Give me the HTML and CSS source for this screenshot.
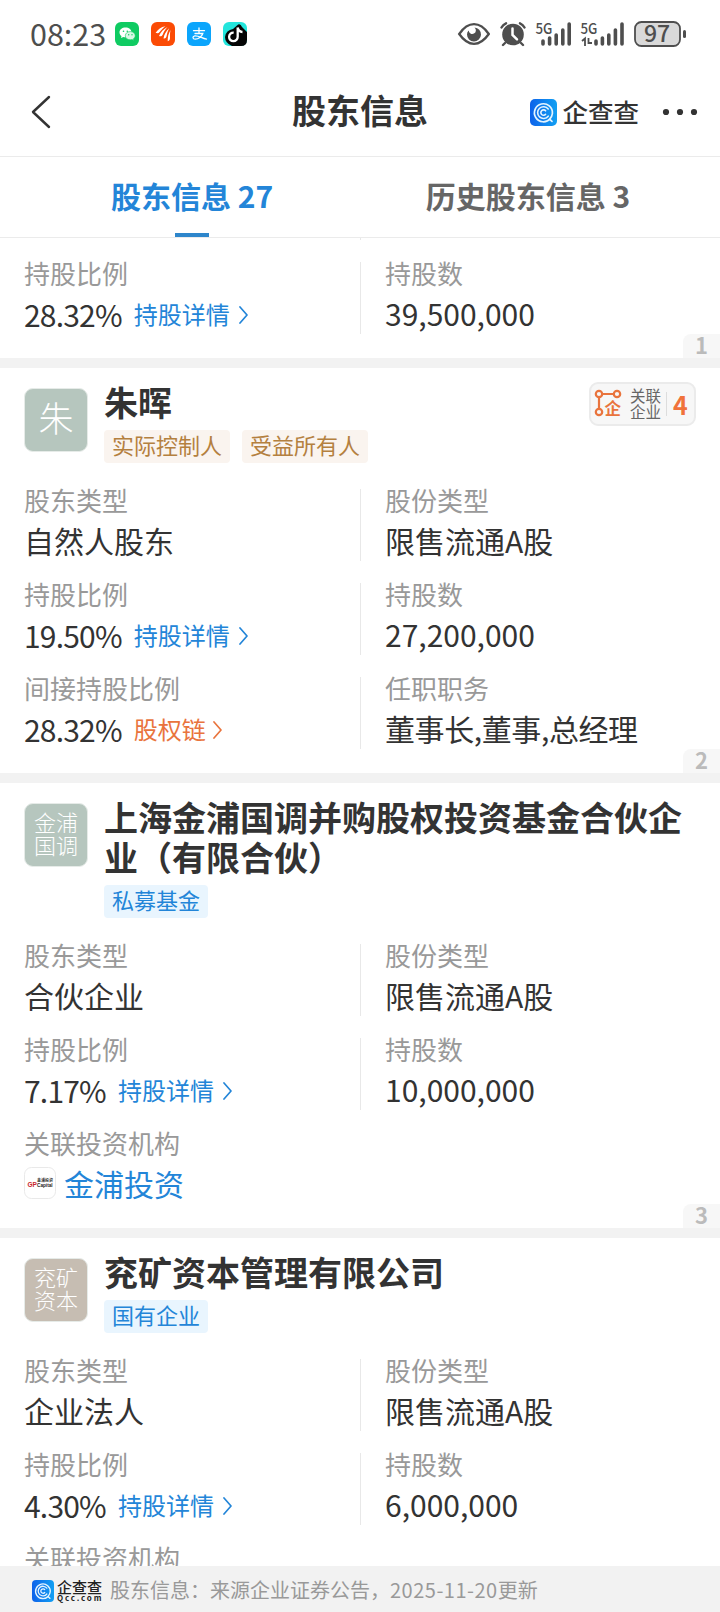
FILE: index.html
```html
<!DOCTYPE html>
<html lang="zh-CN">
<head>
<meta charset="utf-8">
<title>股东信息</title>
<link rel="stylesheet" href="styles.css">
</head>
<body>
<svg class="defs" width="0" height="0">
  <defs>
    <linearGradient id="brand" x1="0" y1="0" x2="1" y2="0"><stop offset="0" stop-color="#0d62ea"/><stop offset="1" stop-color="#12a0f2"/></linearGradient>
    <symbol id="qcc" viewBox="0 0 27 27">
      <rect width="27" height="27" rx="5" fill="url(#brand)"/>
      <g fill="none" stroke="#e4f4ff" stroke-linecap="round">
        <path d="M20.3 19.6A9 9 0 1 1 22.4 14.5C22.2 17 21 18.800 19.600 20.200L22 22.400" stroke-width="1.700"/>
        <path d="M18.200 10A5.900 5.900 0 1 0 18.200 17.200" stroke-width="1.600"/>
        <path d="M15.600 11.800A2.700 2.700 0 1 0 15.600 15.300" stroke-width="1.600"/>
      </g>
    </symbol>
    <symbol id="more" viewBox="0 0 9 18"><path d="M1 1L8 9L1 17" fill="none" stroke="currentColor" stroke-width="1.700" stroke-linecap="round" stroke-linejoin="round"/></symbol>
  </defs>
</svg>
<div class="screen">
  <div class="status">
    <span class="time">08:23</span>
    <div class="apps">
      <svg width="24" height="24" viewBox="0 0 24 24"><rect width="24" height="24" rx="6" fill="#0fcb62"/><path d="M10.500 5.600C7 5.600 4.500 7.700 4.500 10.400c0 1.500.8 2.800 2 3.700l-.5 2 2.300-1.200c.8.200 1.500.3 2.300.3 3.300 0 5.800-2 5.800-4.800S13.900 5.600 10.500 5.600z" fill="#fff"/><path d="M15.300 9.600c-2.900 0-5 1.800-5 4.100s2.100 4.100 5 4.100c.6 0 1.200-.1 1.800-.3l1.700 1-.4-1.700c1.100-.8 1.800-1.900 1.800-3.100 0-2.300-2.200-4.100-4.900-4.100z" fill="#d9f8e5" stroke="#0fcb62" stroke-width=".6"/><g fill="#0fcb62"><circle cx="8.500" cy="9.200" r=".8"/><circle cx="12.300" cy="9.200" r=".8"/><circle cx="13.700" cy="12.700" r=".7"/><circle cx="17" cy="12.700" r=".7"/></g></svg>
      <svg width="24" height="24" viewBox="0 0 24 24"><rect width="24" height="24" rx="6" fill="#fb4b05"/><g fill="#fff"><path d="M14.500 4.300C10 5 7 7.500 4.600 10.800c1.600.8 3 .6 4-.7C10.300 7.900 12 6 14.500 4.300z"/><path d="M16.600 5C12.500 7 9.600 10 8 14c1.900.6 3 .1 3.800-1.600 1.300-3 2.300-5 4.800-7.400z"/><path d="M18.200 6.200c-3.200 3-5 6-5.700 10.200 1.900.3 2.700-.6 3.100-2.300.6-3 1.200-5.200 2.600-7.900z"/><path d="M19.500 8c-2 3.500-2.900 7-2.800 11.200 1.700-.5 2.300-1.800 2.300-3.500-.1-2.800 0-4.900.5-7.700z"/></g></svg>
      <svg width="24" height="24" viewBox="0 0 24 24"><rect width="24" height="24" rx="6" fill="#0ba5fc"/><g fill="none" stroke="#fff" stroke-width="1.300" stroke-linecap="round"><path d="M6.500 8.700H17.500M12 6v5.400M8 11.500H15.800C14.800 14.600 11.500 17.200 8.300 17.200 5.400 17.200 5.200 14.400 7.800 13.900c3.500-.5 6.400 1.900 11.700 3.300"/></g></svg>
      <svg width="24" height="24" viewBox="0 0 24 24"><rect width="24" height="24" rx="6" fill="#23e5dc"/><path d="M14 3.500q3-3 5 1.500l5 5v8q0 6-6 6H9Q2 21 2 15q1-7 8-8z" fill="#050505"/><path d="M14.700 5.500v9.300a4.300 4.300 0 1 1-4-4.200M14.700 5.500c.5 2.800 2.200 4.300 4.800 4.500" fill="none" stroke="#fff" stroke-width="2.300"/></svg>
    </div>
    <svg class="system" width="230" height="44" viewBox="457 12 230 44">
      <g fill="#4e4e4e">
        <path d="M459.200 34Q466 24.200 474 24.200T488.800 34Q482 43.800 474 43.800T459.200 34Z" fill="none" stroke="#4e4e4e" stroke-width="2.300"/>
        <path d="M474.500 27.500A7 7 0 1 1 467 34.500Q467 32 468.700 30.500A3.600 3.600 0 1 0 474.500 27.500Z"/>
        <circle cx="513" cy="34.500" r="10.800"/>
        <path d="M501.500 27.500Q503 24.500 506 23.300M524.500 27.500Q523 24.500 520 23.300M505 43l-2 2M521 43l2 2" fill="none" stroke="#4e4e4e" stroke-width="2.400" stroke-linecap="round"/>
        <path d="M512.500 28.500V35L517 39.300" fill="none" stroke="#fff" stroke-width="2.500" stroke-linecap="round"/>
        <g fill="none" stroke="#4e4e4e" stroke-width="3.600" stroke-linecap="round"><path d="M543 41v3M549.600 38v6M556.200 35v9M562.800 30v14M569.200 24v20M596 41v3M602.400 38v6M608.800 35v9M615.400 30v14M622 24v20"/></g>
        <path d="M582 41l3-2.500V46M592 43h-3.500V38" fill="none" stroke="#4e4e4e" stroke-width="1.800"/>
        <rect x="635" y="22" width="45" height="24" rx="6.500" fill="#d9d9d9" stroke="#4e4e4e" stroke-width="1.800"/>
        <rect x="683" y="30" width="3" height="8" rx="1.500"/>
        <text class="net" x="535.500" y="34" textLength="17" lengthAdjust="spacingAndGlyphs">5G</text>
        <text class="net" x="580.500" y="34" textLength="17" lengthAdjust="spacingAndGlyphs">5G</text>
        <text class="charge" x="657" y="42" text-anchor="middle">97</text>
      </g>
    </svg>
  </div>
  <header class="nav">
    <svg class="back" width="20" height="34" viewBox="0 0 20 34"><path d="M18 2L2 17L18 32" fill="none" stroke="#333" stroke-width="2.400" stroke-linecap="round" stroke-linejoin="round"/></svg>
    <h1>股东信息</h1>
    <div class="nav-right">
      <svg width="27" height="27"><use href="#qcc"/></svg>
      <span class="wordmark">企查查</span>
      <svg class="dots" width="36" height="8" viewBox="0 0 36 8"><g fill="#333"><circle cx="4" cy="4" r="3.100"/><circle cx="18" cy="4" r="3.100"/><circle cx="32" cy="4" r="3.100"/></g></svg>
    </div>
  </header>
  <nav class="tabs">
    <div class="tab active">股东信息 27</div>
    <div class="tab">历史股东信息 3</div>
  </nav>
  <main class="list">
    <section class="card clipped">
      <div class="row tail"><div class="cell"></div><div class="cell"></div></div>
      <div class="row">
        <div class="cell"><div class="label">持股比例</div><div class="value"><span class="pct">28.32%</span><span class="link">持股详情<svg width="9" height="18"><use href="#more"/></svg></span></div></div>
        <div class="cell"><div class="label">持股数</div><div class="value">39,500,000</div></div>
      </div>
      <span class="index">1</span>
    </section>
    <section class="card">
      <div class="head">
        <div class="avatar sage single">朱</div>
        <div class="info"><h2>朱晖</h2><div class="tags"><span class="tag gold">实际控制人</span><span class="tag gold">受益所有人</span></div></div>
        <div class="related">
          <svg width="28" height="30" viewBox="0 0 28 30"><g fill="none" stroke="#e9743d" stroke-width="2.200"><circle cx="5" cy="5" r="3.200"/><circle cx="23" cy="5" r="3.200"/><circle cx="5" cy="23" r="3.200"/><path d="M8.200 5H19.800M5 8.200V19.800"/></g><text class="ent" x="10.500" y="25.500">企</text></svg>
          <span class="related-text">关联<br>企业</span>
          <b>4</b>
        </div>
      </div>
      <div class="row">
        <div class="cell"><div class="label">股东类型</div><div class="value">自然人股东</div></div>
        <div class="cell"><div class="label">股份类型</div><div class="value">限售流通A股</div></div>
      </div>
      <div class="row">
        <div class="cell"><div class="label">持股比例</div><div class="value"><span class="pct">19.50%</span><span class="link">持股详情<svg width="9" height="18"><use href="#more"/></svg></span></div></div>
        <div class="cell"><div class="label">持股数</div><div class="value">27,200,000</div></div>
      </div>
      <div class="row">
        <div class="cell"><div class="label">间接持股比例</div><div class="value"><span class="pct">28.32%</span><span class="link chain">股权链<svg width="9" height="18"><use href="#more"/></svg></span></div></div>
        <div class="cell"><div class="label">任职职务</div><div class="value duties">董事长,董事,总经理</div></div>
      </div>
      <span class="index">2</span>
    </section>
    <section class="card">
      <div class="head">
        <div class="avatar sage">金浦<br>国调</div>
        <div class="info"><h2>上海金浦国调并购股权投资基金合伙企业（有限合伙）</h2><div class="tags"><span class="tag blue">私募基金</span></div></div>
      </div>
      <div class="row">
        <div class="cell"><div class="label">股东类型</div><div class="value">合伙企业</div></div>
        <div class="cell"><div class="label">股份类型</div><div class="value">限售流通A股</div></div>
      </div>
      <div class="row">
        <div class="cell"><div class="label">持股比例</div><div class="value"><span class="pct">7.17%</span><span class="link">持股详情<svg width="9" height="18"><use href="#more"/></svg></span></div></div>
        <div class="cell"><div class="label">持股数</div><div class="value">10,000,000</div></div>
      </div>
      <div class="row">
        <div class="cell"><div class="label">关联投资机构</div><div class="value fund">
          <svg width="32" height="32" viewBox="0 0 32 32"><rect x=".5" y=".5" width="31" height="31" rx="7" fill="#fff" stroke="#e9e9e9"/><text class="gp" x="3.500" y="19.500">GP</text><text class="gp-cn" x="13" y="14.500">金浦投资</text><text class="gp-en" x="13" y="20">Capital</text></svg>
          <span>金浦投资</span></div></div>
      </div>
      <span class="index">3</span>
    </section>
    <section class="card">
      <div class="head">
        <div class="avatar sand">兖矿<br>资本</div>
        <div class="info"><h2>兖矿资本管理有限公司</h2><div class="tags"><span class="tag blue">国有企业</span></div></div>
      </div>
      <div class="row">
        <div class="cell"><div class="label">股东类型</div><div class="value">企业法人</div></div>
        <div class="cell"><div class="label">股份类型</div><div class="value">限售流通A股</div></div>
      </div>
      <div class="row">
        <div class="cell"><div class="label">持股比例</div><div class="value"><span class="pct">4.30%</span><span class="link">持股详情<svg width="9" height="18"><use href="#more"/></svg></span></div></div>
        <div class="cell"><div class="label">持股数</div><div class="value">6,000,000</div></div>
      </div>
      <div class="row">
        <div class="cell"><div class="label">关联投资机构</div></div>
      </div>
    </section>
  </main>
  <footer class="source">
    <svg width="22" height="22"><use href="#qcc"/></svg>
    <div class="mini-mark"><span>企查查</span><small>Qcc.com</small></div>
    <span class="note">股东信息：来源企业证券公告，<span class="date">2025-11-20</span>更新</span>
  </footer>
</div>
</body>
</html>
```
FILE: styles.css
```css
* { box-sizing: border-box; }
body {
  margin: 0;
  background: #fff;
  color: #333;
  font-family: "Noto Sans CJK SC", sans-serif;
}
h1, h2 { margin: 0; font-weight: 700; }
svg { display: block; flex: none; }
.defs { position: absolute; }
.screen {
  width: 720px;
  height: 1612px;
  display: flex;
  flex-direction: column;
  overflow: hidden;
}

/* status bar */
.status {
  height: 68px;
  flex: none;
  display: flex;
  align-items: center;
  padding: 0 33px 0 30px;
}
.time { width: 85px; font-size: 30.500px; line-height: 36px; padding-bottom: 2px; color: #4e4e4e; }
.apps { display: flex; gap: 12px; }
.system { margin-left: auto; }
.net { font: 500 15px "Noto Sans CJK SC", sans-serif; }
.charge { font: 500 23px "Noto Sans CJK SC", sans-serif; }

/* title bar */
.nav {
  height: 89px;
  flex: none;
  display: grid;
  grid-template-columns: 1fr auto 1fr;
  align-items: center;
  padding: 0 22px 0 31px;
  border-bottom: 1px solid #ebebeb;
}
.nav h1 { font-size: 34px; line-height: 40px; margin-left: -9px; padding-bottom: 4px; }
.nav-right { display: flex; align-items: center; justify-content: flex-end; }
.wordmark { margin: 0 23px 0 5px; font-size: 25.500px; line-height: 30px; font-weight: 500; padding-bottom: 3px; }

/* tabs */
.tabs {
  height: 81px;
  flex: none;
  display: grid;
  grid-template-columns: 1fr 1fr;
  padding: 0 24px;
  border-bottom: 1px solid #ebebeb;
}
.tab {
  display: flex;
  flex-direction: column;
  align-items: center;
  justify-content: space-between;
  padding-top: 18px;
  font-size: 30px;
  line-height: 40px;
  font-weight: 700;
  color: #666;
}
.tab.active { color: #2385d8; }
.tab.active::after { content: ""; width: 34px; height: 4px; background: #2e86cb; }

/* shareholder cards */
.list { flex: 1; min-height: 0; overflow: hidden; }
.card {
  position: relative;
  padding: 16px 0 24px;
  border-bottom: 10px solid #f2f2f2;
}
.card.clipped { padding-top: 0; }
.head {
  display: flex;
  align-items: flex-start;
  padding: 0 24px;
  margin-bottom: 26px;
}
.avatar {
  width: 64px;
  height: 64px;
  flex: none;
  margin: 4px 16px 0 0;
  display: flex;
  align-items: center;
  justify-content: center;
  border: 1px solid #e6ebe8;
  border-radius: 9px;
  color: #fff;
  font-size: 22px;
  line-height: 23px;
  font-weight: 300;
  padding-bottom: 4px;
}
.avatar.single { font-size: 35px; line-height: 36px; padding-bottom: 6px; }
.sage { background: #b6c6be; }
.sand { background: #c6bdb2; }
.info { flex: 1; min-width: 0; }
.info h2 { font-size: 34px; line-height: 40px; margin: -2px 0 8px; }
.tags { display: flex; gap: 12px; }
.tag { height: 33px; padding: 0 8px; border-radius: 4px; font-size: 22px; line-height: 28px; }
.gold { background: #faf4ef; color: #b4803f; }
.blue { background: #e9f5fe; color: #2385d8; }
.related {
  display: flex;
  align-items: center;
  width: 107px;
  height: 44px;
  margin-top: -2px;
  padding: 0 0 0 3px;
  border: 2px solid #ebebeb;
  border-radius: 9px;
  background: #f7f7f7;
}
.ent { font: 700 16.500px "Noto Sans CJK SC", sans-serif; fill: #e9743d; }
.related-text {
  flex: none;
  margin-left: 8px;
  font-size: 15.500px;
  line-height: 16px;
  color: #666;
  padding-bottom: 2px;
  white-space: nowrap;
}
.related b {
  margin-left: 5px;
  padding-left: 6px;
  border-left: 1px solid #ddd;
  font-size: 25px;
  line-height: 24px;
  color: #f0723b;
}
.row { display: grid; grid-template-columns: 360px 360px; height: 72px; }
.row + .row { margin-top: 22px; }
.row.tail { height: 2px; }
.cell { padding-left: 24px; }
.cell + .cell { border-left: 1px solid #e8e8e8; }
.label { font-size: 26px; line-height: 22px; color: #999; }
.value {
  display: flex;
  align-items: center;
  margin-top: 12px;
  font-size: 30px;
  line-height: 34px;
  white-space: nowrap;
}
.pct { letter-spacing: -.8px; margin: 2px 12px 0 0; line-height: 32px; }
.link { display: flex; align-items: center; gap: 9px; padding-top: 2px; font-size: 24px; line-height: 32px; color: #2385d8; }
.link svg { margin-top: 2px; }
.chain { gap: 7px; color: #e9743d; }
.duties { letter-spacing: -.4px; }
.fund { gap: 8px; color: #2385d8; }
.gp { font: 700 6.500px "Liberation Sans", sans-serif; fill: #c8242b; }
.gp-cn { font: 700 4px "Noto Sans CJK SC", sans-serif; fill: #333; }
.gp-en { font: 700 4.700px "Liberation Sans", sans-serif; fill: #222; }
.index {
  position: absolute;
  right: 0;
  bottom: 0;
  width: 37px;
  height: 24px;
  border-top-left-radius: 8px;
  background: #f7f7f7;
  color: #bbb;
  font-size: 22px;
  line-height: 21px;
  font-weight: 700;
  text-align: center;
}

/* data source strip */
.source {
  height: 46px;
  flex: none;
  display: flex;
  align-items: center;
  padding: 3px 32px 0;
  background: #f2f2f2;
}
.mini-mark { display: flex; flex-direction: column; width: 46px; margin: 0 7px 0 3px; color: #222; }
.mini-mark span { font-size: 15px; line-height: 14px; font-weight: 500; }
.mini-mark small { font-size: 8px; line-height: 8px; font-weight: 700; letter-spacing: 1.800px; }
.note { font-size: 20px; line-height: 24px; color: #999; white-space: nowrap; padding-bottom: 1px; }
.date { letter-spacing: .5px; }
```
